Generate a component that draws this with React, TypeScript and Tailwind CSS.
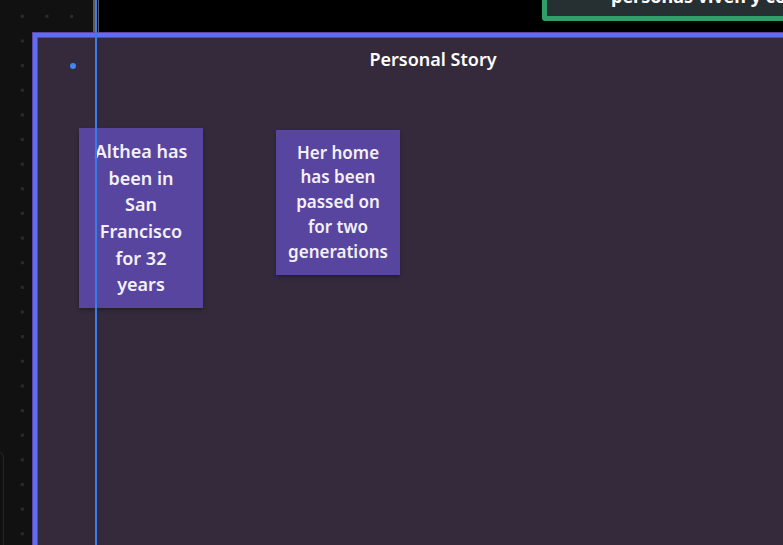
import React from 'react';

const font = { fontFamily: '"Noto Sans", "Open Sans", Arial, sans-serif' };

interface StickyProps {
  text: string[];
  className: string;
  textClass: string;
}

// sticky note on the whiteboard canvas
const Sticky: React.FC<StickyProps> = ({ text, className, textClass }) => (
  <div
    className={`absolute flex flex-col items-center justify-center bg-[#58459f] text-center font-semibold text-[#f3f0f8] shadow-[0_2px_4px_rgba(0,0,0,0.3)] ${className} ${textClass}`}
  >
    {text.map((line) => (
      <span key={line} className="whitespace-nowrap">
        {line}
      </span>
    ))}
  </div>
);

export default function App() {
  return (
    <div
      className="relative h-[545px] w-[783px] overflow-hidden bg-[#111111] bg-[radial-gradient(circle,#2b2b2b_1.5px,transparent_1.8px)] bg-[length:24.65px_24.65px] bg-[position:10px_4px]"
      style={font}
    >
      {/* faint panel at left bottom */}
      <div className="absolute left-[-20px] top-[450px] h-[120px] w-[24px] rounded-tr-[8px] border border-[#262626]" />

      {/* black element above the frame */}
      <div className="absolute left-[93px] top-0 h-[34px] w-[700px] border-l-2 border-[#5a5a5a] bg-black" />

      {/* green box top right */}
      <div className="absolute left-[542px] top-[-40px] h-[61px] w-[300px] rounded-[3px] border-[5px] border-[#2f9e68] bg-[#263033]">
        <div className="absolute left-[64px] top-[19px] whitespace-nowrap text-[18px] font-bold leading-[24px] text-white">
          personas viven y conviven
        </div>
      </div>

      {/* frame */}
      <div className="absolute left-[33px] top-[33px] h-[600px] w-[800px] border-[4px] border-[#5d6ef2] bg-[#352a3c] shadow-[0_0_0_1px_#5b47a3,inset_0_0_0_1px_#5b47a3]">
        <div className="pt-[10px] text-center text-[18px] font-semibold leading-[24px] text-white">
          Personal Story
        </div>
        <div className="absolute left-[33px] top-[26px] h-[6px] w-[6px] rounded-full bg-[#4285f4]" />

        <Sticky
          text={['Althea has', 'been in', 'San', 'Francisco', 'for 32', 'years']}
          className="left-[42px] top-[91px] h-[180px] w-[124px]"
          textClass="text-[18px] leading-[26.6px]"
        />
        <Sticky
          text={['Her home', 'has been', 'passed on', 'for two', 'generations']}
          className="left-[239px] top-[93px] h-[145px] w-[124px]"
          textClass="text-[17px] leading-[24.8px]"
        />
      </div>

      {/* vertical guide line */}
      <div className="absolute left-[95px] top-0 h-full w-[2px] bg-[#3b7be8]" />
      <div className="absolute left-[98px] top-0 h-[33px] w-px bg-[#5a5a5a]" />
    </div>
  );
}
